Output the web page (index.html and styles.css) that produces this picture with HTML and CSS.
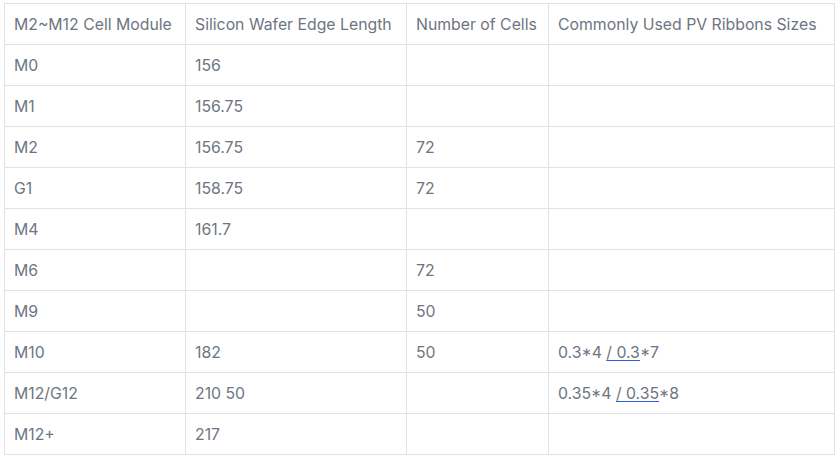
FILE: index.html
```html
<!DOCTYPE html>
<html>
<head>
<meta charset="utf-8">
<link rel="stylesheet" href="styles.css">
</head>
<body>
<table class="spec">
  <colgroup>
    <col class="c1"><col class="c2"><col class="c3"><col class="c4">
  </colgroup>
  <tr><td>M2~M12 Cell Module</td><td>Silicon Wafer Edge Length</td><td>Number of Cells</td><td>Commonly Used PV Ribbons Sizes</td></tr>
  <tr><td>M0</td><td>156</td><td></td><td></td></tr>
  <tr><td>M1</td><td>156.75</td><td></td><td></td></tr>
  <tr><td>M2</td><td>156.75</td><td>72</td><td></td></tr>
  <tr><td>G1</td><td>158.75</td><td>72</td><td></td></tr>
  <tr><td>M4</td><td>161.7</td><td></td><td></td></tr>
  <tr><td>M6</td><td></td><td>72</td><td></td></tr>
  <tr><td>M9</td><td></td><td>50</td><td></td></tr>
  <tr><td>M10</td><td>182</td><td>50</td><td>0.3*4 <a class="lk" href="#">/ 0.3</a>*7</td></tr>
  <tr><td>M12/G12</td><td>210 50</td><td></td><td>0.35*4 <a class="lk" href="#">/ 0.35</a>*8</td></tr>
  <tr><td>M12+</td><td>217</td><td></td><td></td></tr>
</table>
</body>
</html>
```
FILE: styles.css
```css
html, body {
  margin: 0;
  background: #ffffff;
}
body {
  padding: 3px 0 0 4px;
  font-family: Inter, "Noto Sans", sans-serif;
  font-size: 15.8px;
  color: #6e7581;
}
.spec {
  border-collapse: collapse;
  table-layout: fixed;
  width: 830px;
}
.c1 { width: 181px; }
.c2 { width: 221px; }
.c3 { width: 142px; }
.c4 { width: 286px; }
.spec td {
  border: 1px solid #e2e2e2;
  height: 38px;
  padding: 2px 9px 0;
  vertical-align: middle;
  white-space: nowrap;
  line-height: 20px;
}
.lk {
  color: #6e7581;
  text-decoration: underline;
  text-decoration-color: #2f5fe0;
  text-underline-offset: 2px;
}
```
